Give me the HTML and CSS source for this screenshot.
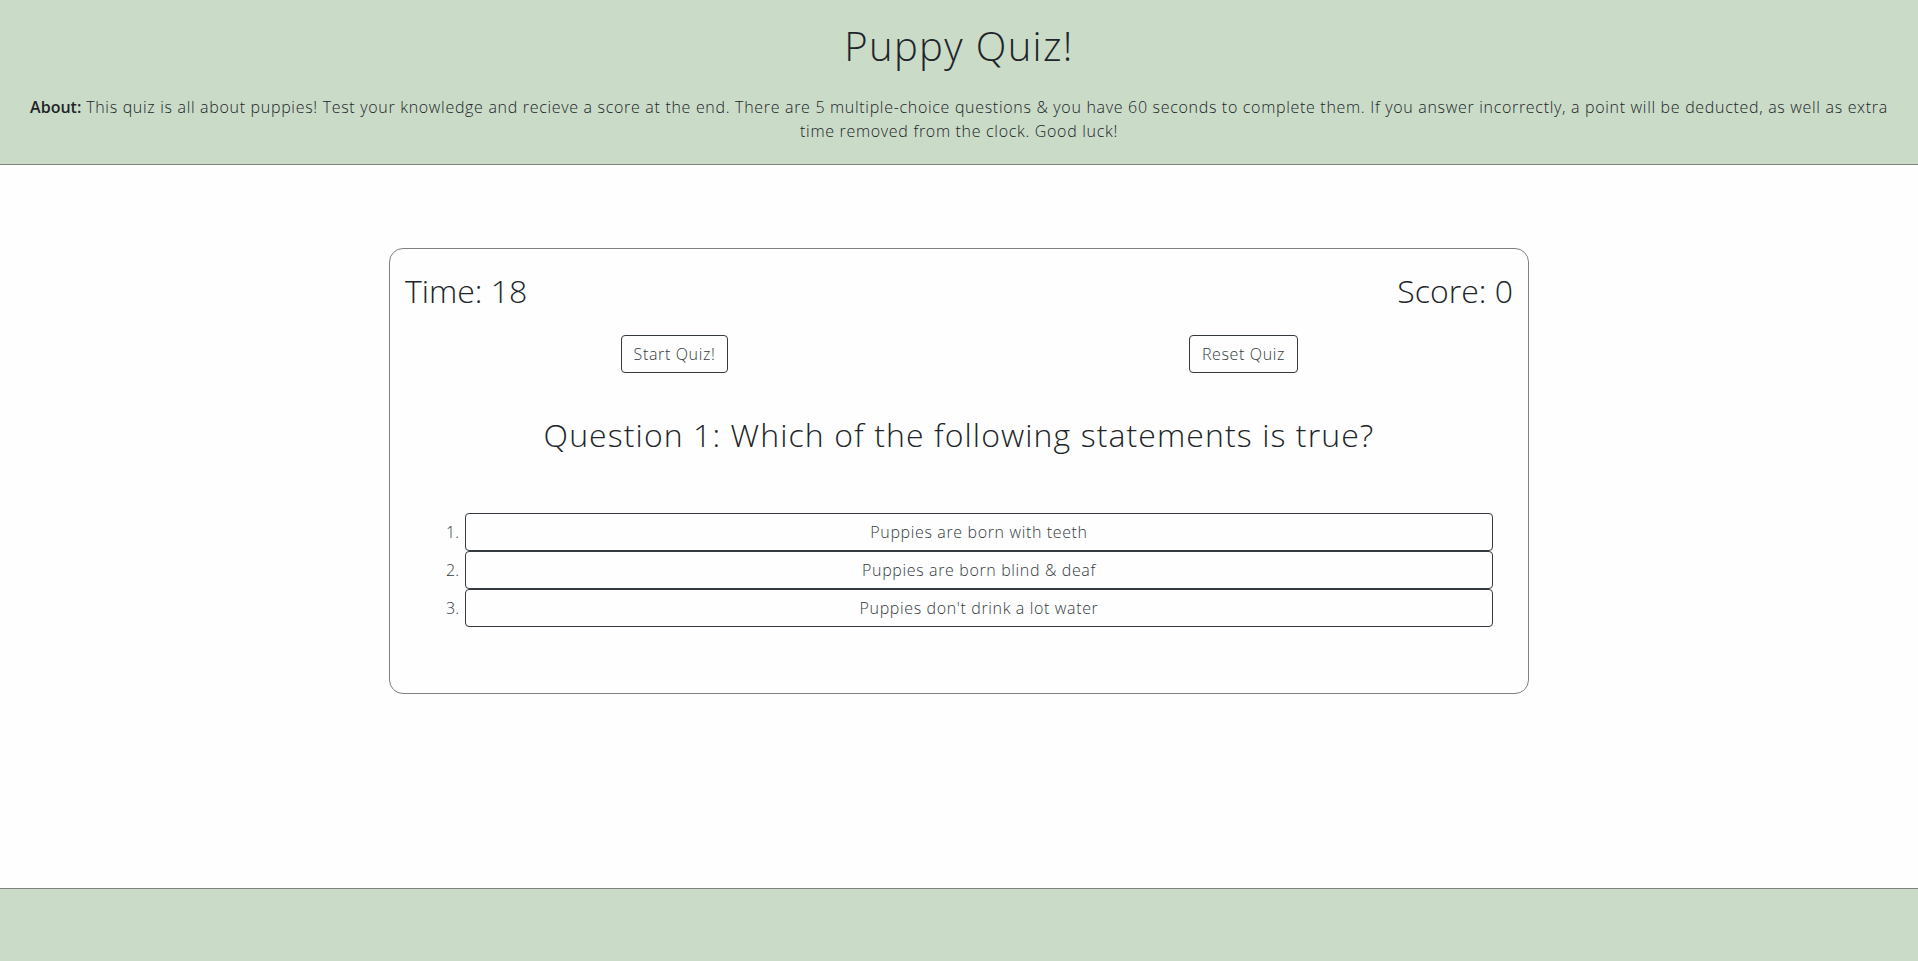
FILE: index.html
```html
<!DOCTYPE html>
<html lang="en">
<head>
<meta charset="utf-8">
<title>Puppy Quiz!</title>
<link rel="stylesheet" href="styles.css">
</head>
<body>
<header class="site-header">
  <h1 class="title">Puppy Quiz!</h1>
  <p class="about"><strong>About:</strong> This quiz is all about puppies! Test your knowledge and recieve a score at the end. There are 5 multiple-choice questions &amp; you have 60 seconds to complete them. If you answer incorrectly, a point will be deducted, as well as extra time removed from the clock. Good luck!</p>
</header>
<main class="main">
  <section class="quiz-card">
    <div class="stats">
      <h2 class="stat">Time: 18</h2>
      <h2 class="stat">Score: 0</h2>
    </div>
    <div class="controls">
      <div class="control-col"><button class="btn">Start Quiz!</button></div>
      <div class="control-col"><button class="btn">Reset Quiz</button></div>
    </div>
    <h2 class="question">Question 1: Which of the following statements is true?</h2>
    <ol class="answers">
      <li class="answer"><span class="num">1.</span><button class="btn answer-btn">Puppies are born with teeth</button></li>
      <li class="answer"><span class="num">2.</span><button class="btn answer-btn">Puppies are born blind &amp; deaf</button></li>
      <li class="answer"><span class="num">3.</span><button class="btn answer-btn">Puppies don't drink a lot water</button></li>
    </ol>
  </section>
</main>
<footer class="site-footer"></footer>
</body>
</html>
```
FILE: styles.css
```css
* { box-sizing: border-box; }
html, body { margin: 0; padding: 0; }
body {
  font-family: "Open Sans", Lato, sans-serif;
  font-weight: 300;
  color: #212529;
  background: #fdfefd;
  min-height: 100vh;
  display: flex;
  flex-direction: column;
  font-size: 16px;
  line-height: 1.5;
}
.site-header {
  background: #cadbc8;
  border-bottom: 1px solid #808080;
  padding: 22px 27px 5px;
  text-align: center;
}
.title {
  margin: 0 0 25px;
  font-size: 40px;
  font-weight: 300;
  line-height: 1.2;
  letter-spacing: 0.034em;
}
.about {
  margin: 0 0 16px;
  font-size: 16px;
  line-height: 24px;
  letter-spacing: 0.043em;
}
.about strong { font-weight: 600; letter-spacing: 0; }
.main {
  flex: 1;
  padding-top: 83px;
  display: flex;
  justify-content: center;
  align-items: flex-start;
}
.quiz-card {
  width: 1140px;
  border: 1px solid #808080;
  border-radius: 14px;
  padding: 23px 15px 66px;
}
.stats {
  display: flex;
  justify-content: space-between;
}
.stat {
  margin: 0;
  font-size: 32px;
  font-weight: 300;
  line-height: 1.2;
}
.stat-time { letter-spacing: -0.01em; }
.controls {
  display: flex;
  margin: 25px -15px 0;
}
.control-col {
  flex: 1;
  text-align: center;
}
.btn {
  font-family: inherit;
  font-weight: 300;
  font-size: 16px;
  line-height: 24px;
  letter-spacing: 0.04em;
  color: #343a40;
  background: transparent;
  border: 1px solid #343a40;
  border-radius: 4px;
  padding: 6px 12px;
}
.question {
  margin: 43px 0 0;
  text-align: center;
  font-size: 32px;
  font-weight: 300;
  line-height: 1.2;
  letter-spacing: 0.034em;
}
.answers {
  list-style: none;
  margin: 58px 20px 0 0;
  padding: 0;
}
.answer {
  display: flex;
  align-items: center;
}
.num {
  width: 60px;
  text-align: right;
  padding-right: 6px;
  color: #343a40;
}
.answer-btn {
  flex: 1;
  display: block;
  text-align: center;
}
.site-footer {
  height: 73px;
  background: #cadbc8;
  border-top: 1px solid #808080;
}
```
